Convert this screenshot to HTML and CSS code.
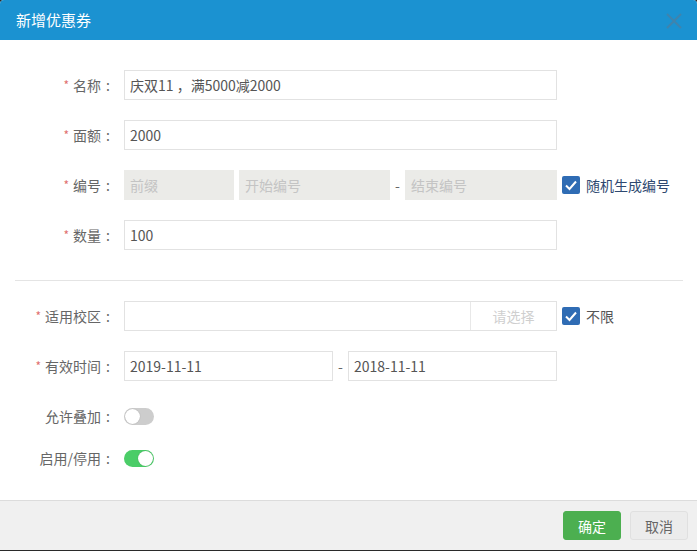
FILE: index.html
```html
<!DOCTYPE html>
<html lang="zh-CN">
<head>
<meta charset="utf-8">
<title>新增优惠券</title>
<link rel="stylesheet" href="styles.css">
</head>
<body>
<div class="dialog">
  <header class="dlg-head">
    <h1 class="dlg-title">新增优惠券</h1>
    <button class="dlg-close" type="button" aria-label="关闭">
      <svg width="18" height="16" viewBox="0 0 18 16"><path d="M2 1 L16 15 M16 1 L2 15" stroke="currentColor" stroke-width="2" fill="none"/></svg>
    </button>
  </header>

  <main class="dlg-body">
    <section class="group">
      <div class="row">
        <label class="lbl"><span class="req">*</span>名称<span class="colon">:</span></label>
        <div class="ctl"><input class="inp full" value="庆双11 ，满5000减2000" readonly></div>
      </div>
      <div class="row">
        <label class="lbl"><span class="req">*</span>面额<span class="colon">:</span></label>
        <div class="ctl"><input class="inp full" value="2000" readonly></div>
      </div>
      <div class="row">
        <label class="lbl"><span class="req">*</span>编号<span class="colon">:</span></label>
        <div class="ctl">
          <input class="inp dis w-prefix" placeholder="前缀" disabled>
          <input class="inp dis w-start" placeholder="开始编号" disabled>
          <span class="dash">-</span>
          <input class="inp dis w-end" placeholder="结束编号" disabled>
        </div>
        <span class="check"><span class="box"><svg width="14" height="12" viewBox="0 0 14 12"><path d="M2 6.5 L5.5 10 L12 2.5" stroke="#fff" stroke-width="2" fill="none"/></svg></span><span class="check-txt navy">随机生成编号</span></span>
      </div>
      <div class="row">
        <label class="lbl"><span class="req">*</span>数量<span class="colon">:</span></label>
        <div class="ctl"><input class="inp full" value="100" readonly></div>
      </div>
    </section>

    <hr class="divider">

    <section class="group">
      <div class="row">
        <label class="lbl"><span class="req">*</span>适用校区<span class="colon">:</span></label>
        <div class="ctl picker">
          <span class="picker-field"></span>
          <span class="picker-btn">请选择</span>
        </div>
        <span class="check"><span class="box"><svg width="14" height="12" viewBox="0 0 14 12"><path d="M2 6.5 L5.5 10 L12 2.5" stroke="#fff" stroke-width="2" fill="none"/></svg></span><span class="check-txt">不限</span></span>
      </div>
      <div class="row">
        <label class="lbl"><span class="req">*</span>有效时间<span class="colon">:</span></label>
        <div class="ctl">
          <input class="inp w-date" value="2019-11-11" readonly>
          <span class="dash">-</span>
          <input class="inp w-date" value="2018-11-11" readonly>
        </div>
      </div>
      <div class="row row-switch first-switch">
        <label class="lbl">允许叠加<span class="colon">:</span></label>
        <div class="ctl"><span class="switch"><span class="knob"></span></span></div>
      </div>
      <div class="row row-switch">
        <label class="lbl">启用/停用<span class="colon">:</span></label>
        <div class="ctl"><span class="switch on"><span class="knob"></span></span></div>
      </div>
    </section>
  </main>

  <footer class="dlg-foot">
    <button class="btn btn-ok" type="button">确定</button>
    <button class="btn btn-cancel" type="button">取消</button>
  </footer>
</div>
</body>
</html>
```

FILE: styles.css
```css
* { box-sizing: border-box; }
html, body { margin: 0; padding: 0; }
body {
  background: #2a2a2a;
  width: 697px;
  height: 551px;
  overflow: hidden;
  font-family: "Noto Sans CJK SC", "Noto Sans", sans-serif;
  font-size: 14px;
  color: #555;
}
.dialog {
  width: 697px;
  height: 550px;
  background: #fff;
  border-radius: 4px 4px 0 0;
  overflow: hidden;
  display: flex;
  flex-direction: column;
}
.dlg-head {
  height: 40px;
  flex: none;
  background: #1b92d1;
  display: flex;
  align-items: center;
  justify-content: space-between;
  padding: 0 14px 0 16px;
}
.dlg-title {
  margin: 0;
  font-size: 15px;
  font-weight: normal;
  color: #fff;
  line-height: 20px;
}
.dlg-close {
  border: 0;
  background: none;
  padding: 0;
  width: 18px;
  height: 16px;
  color: #3f84ad;
  display: flex;
  margin-top: 2px;
}
.dlg-body {
  height: 460px;
  flex: none;
  padding-top: 30px;
}
.group {
  display: flex;
  flex-direction: column;
  gap: 20px;
}
.row {
  display: flex;
  align-items: center;
  height: 30px;
}
.lbl {
  width: 115px;
  flex: none;
  text-align: right;
  color: #666;
  line-height: 20px;
  white-space: nowrap;
}
.colon {
  display: inline-block;
  width: 14px;
  text-align: center;
}
.req {
  color: #e07070;
  font-size: 12px;
  margin-right: 4px;
  position: relative;
  top: -1px;
}
.ctl {
  margin-left: 9px;
  width: 433px;
  height: 30px;
  display: flex;
  align-items: stretch;
  flex: none;
}
.inp {
  height: 30px;
  border: 1px solid #e2e2e2;
  background: #fff;
  padding: 0 5px;
  font: inherit;
  font-size: 14px;
  color: #555;
  outline: none;
  margin: 0;
}
.inp::placeholder { color: #c4c4c4; }
.inp.dis {
  background: #ebebe8;
  border-color: #ebebe8;
}
.full { width: 100%; }
.w-prefix { width: 110px; margin-right: 5px; }
.w-start { width: 151px; }
.w-end { width: 152px; }
.w-date { width: 209px; }
.dash {
  width: 15px;
  text-align: center;
  line-height: 30px;
  color: #666;
}
.check {
  display: flex;
  align-items: center;
  margin-left: 5px;
}
.box {
  width: 18px;
  height: 18px;
  background: #2f6cb4;
  border-radius: 2px;
  display: flex;
  align-items: center;
  justify-content: center;
}
.check-txt {
  margin-left: 6px;
  color: #555;
}
.check-txt.navy { color: #2e4870; }
.picker {
  border: 1px solid #e2e2e2;
}
.picker-field { flex: 1; }
.picker-btn {
  width: 86px;
  border-left: 1px solid #e8e8e8;
  color: #cfcfcf;
  text-align: center;
  line-height: 28px;
}
.divider {
  margin: 30px 14px 20px 15px;
  border: 0;
  border-top: 1px solid #e4e4e4;
  height: 0;
}
.row-switch { height: 22px; }
.row-switch .ctl { height: 22px; align-items: center; }
.first-switch { margin-top: 4px; }
.switch {
  width: 30px;
  height: 17px;
  border-radius: 9px;
  background: #cdcdcd;
  position: relative;
  display: block;
}
.knob {
  position: absolute;
  top: 1px;
  left: 1px;
  width: 15px;
  height: 15px;
  border-radius: 50%;
  background: #fff;
  box-shadow: 0 0 1px rgba(0,0,0,0.3);
}
.switch.on { background: #4bcd68; }
.switch.on .knob { left: 14px; }
.dlg-foot {
  flex: 1;
  background: #f0f0f0;
  border-top: 1px solid #dcdcdc;
  display: flex;
  justify-content: flex-end;
  align-items: flex-start;
  gap: 9px;
  padding: 10px 9px 0 0;
}
.btn {
  width: 58px;
  height: 29px;
  border-radius: 3px;
  font: inherit;
  font-size: 14px;
  padding: 0;
  cursor: pointer;
}
.btn-ok {
  background: #4caf50;
  border: 1px solid #4caf50;
  color: #fff;
}
.btn-cancel {
  background: #ececec;
  border: 1px solid #e0e0e0;
  color: #666;
}
```
